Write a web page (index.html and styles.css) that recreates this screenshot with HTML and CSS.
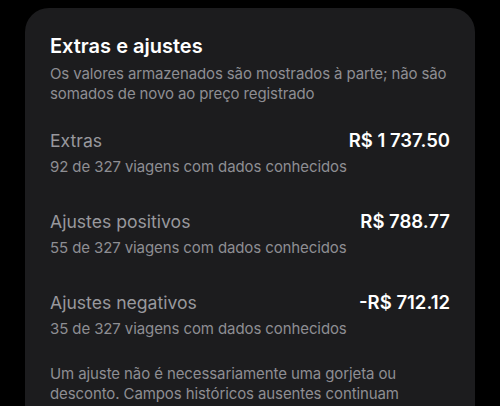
FILE: index.html
```html
<!DOCTYPE html>
<html lang="pt-BR">
<head>
<meta charset="utf-8">
<link rel="stylesheet" href="styles.css">
</head>
<body>
<section class="card">
  <h2 class="title">Extras e ajustes</h2>
  <p class="desc">Os valores armazenados são mostrados à parte; não são somados de novo ao preço registrado</p>
  <div class="row">
    <div class="row-top"><span class="label">Extras</span><span class="amount">R$ 1 737.50</span></div>
    <div class="sub">92 de 327 viagens com dados conhecidos</div>
  </div>
  <div class="row">
    <div class="row-top"><span class="label">Ajustes positivos</span><span class="amount">R$ 788.77</span></div>
    <div class="sub">55 de 327 viagens com dados conhecidos</div>
  </div>
  <div class="row">
    <div class="row-top"><span class="label">Ajustes negativos</span><span class="amount">-R$ 712.12</span></div>
    <div class="sub">35 de 327 viagens com dados conhecidos</div>
  </div>
  <p class="note">Um ajuste não é necessariamente uma gorjeta ou desconto. Campos históricos ausentes continuam desconhecidos.</p>
</section>
</body>
</html>
```
FILE: styles.css
```css
html, body {
  margin: 0;
  padding: 0;
  background: #000;
  height: 406px;
  overflow: hidden;
}
body {
  font-family: Inter, "Noto Sans", sans-serif;
  padding: 8px 25px 0;
}
.card {
  background: #1c1c1e;
  border-radius: 24px;
  padding: 26px 25px 20px;
  color: #fff;
}
.title {
  margin: 0;
  font-size: 20px;
  font-weight: 600;
  line-height: 24px;
}
.desc {
  margin: 6px 0 0;
  font-size: 15px;
  line-height: 20px;
  letter-spacing: -0.12px;
  color: #8e8e93;
}
.row {
  margin-top: 24px;
}
.row + .row {
  margin-top: 32px;
}
.row-top {
  display: flex;
  justify-content: space-between;
  align-items: baseline;
}
.label {
  font-size: 17.6px;
  line-height: 24px;
  color: #98989d;
}
.amount {
  font-size: 18.5px;
  line-height: 24px;
  font-weight: 600;
  color: #fff;
}
.sub {
  margin-top: 4px;
  font-size: 15px;
  line-height: 20px;
  letter-spacing: -0.1px;
  color: #8e8e93;
}
.note {
  margin: 25px 0 0;
  font-size: 15px;
  line-height: 20px;
  letter-spacing: -0.1px;
  color: #8e8e93;
}
```
